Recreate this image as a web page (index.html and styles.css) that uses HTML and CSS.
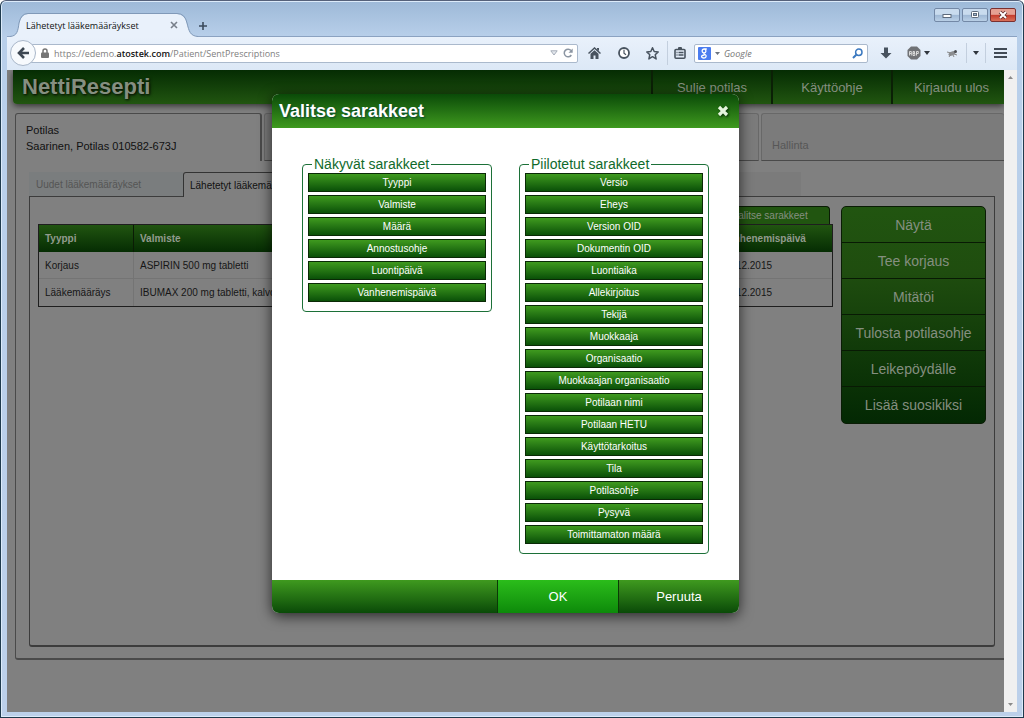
FILE: index.html
```html
<!DOCTYPE html>
<html lang="fi">
<head>
<meta charset="utf-8">
<meta name="viewport" content="width=device-width, initial-scale=1">
<title>Lähetetyt lääkemääräykset</title>
<link rel="stylesheet" href="styles.css">
</head>
<body>
<div class="window">
  <div class="titlebar">
    <div class="browser-tab">
      <svg class="tab-shape" viewBox="0 0 188 26" preserveAspectRatio="none" aria-hidden="true"><path d="M0 24.500C7 24 8 19 9 12Q11 2.500 18 2H167Q175 2.500 177 12C179 19 180 24 188 24.500V26H0Z" fill="#e9f1fb"/><path d="M0 24.500C7 24 8 19 9 11Q11 1.500 18 1.500H167Q175 1.500 177 11C179 19 180 24 188 24.500" fill="none" stroke="#8099b8"/></svg>
      <span class="tab-title">Lähetetyt lääkemääräykset</span>
      <button class="plain tab-close" aria-label="Sulje välilehti"><svg width="8" height="8" viewBox="0 0 8 8"><path d="M1 1l6 6M7 1L1 7" stroke="#777f8a" stroke-width="1.600"/></svg></button>
    </div>
    <button class="plain new-tab" aria-label="Uusi välilehti"><svg width="10" height="10" viewBox="0 0 10 10"><path d="M5 1v8M1 5h8" stroke="#3b4a5c" stroke-width="1.600"/></svg></button>
    <div class="window-controls">
      <button class="win" aria-label="Pienennä"><svg width="24" height="12" viewBox="0 0 24 12"><rect x="8" y="5.500" width="8" height="3" fill="#fff" stroke="#5d6a7c"/></svg></button>
      <button class="win" aria-label="Suurenna"><svg width="24" height="12" viewBox="0 0 24 12"><rect x="8.500" y="2.500" width="7" height="6" rx="1" fill="#fff" stroke="#5d6a7c"/><rect x="10.500" y="4.500" width="3" height="2" fill="#9db5d0" stroke="#5d6a7c"/></svg></button>
      <button class="win win-close" aria-label="Sulje"><svg width="24" height="12" viewBox="0 0 24 12"><path d="M9 3l6 6M15 3L9 9" stroke="#5b2a2a" stroke-width="3.600"/><path d="M9 3l6 6M15 3L9 9" stroke="#fff" stroke-width="2"/></svg></button>
    </div>
  </div>

  <div class="toolbar">
    <button class="back" aria-label="Takaisin"><svg width="13" height="12" viewBox="0 0 13 12"><path d="M7 1L2 6l5 5M2 6h10" fill="none" stroke="#3d4752" stroke-width="2.600"/></svg></button>
    <div class="urlbar">
      <svg width="8" height="10" viewBox="0 0 8 10"><path d="M2 5V3a2 2 0 0 1 4 0v2" fill="none" stroke="#757575" stroke-width="1.500"/><rect y="4.500" width="8" height="5.500" rx="1" fill="#757575"/></svg>
      <span class="url">https://edemo.<b>atostek.com</b>/Patient/SentPrescriptions</span>
      <svg width="8" height="6" viewBox="0 0 8 6"><path d="M.8.8h6.400L4 5Z" fill="#e4e8ee" stroke="#a5adb8"/></svg>
      <svg width="10" height="10" viewBox="0 0 10 10"><path d="M8.300 7A3.800 3.800 0 1 1 8 2.600" fill="none" stroke="#8b95a2" stroke-width="1.500"/><path d="M9.700.5v4.200H5.500Z" fill="#8b95a2"/></svg>
    </div>
    <button class="plain tool" aria-label="Koti"><svg width="13" height="12" viewBox="0 0 13 12"><path d="M.5 6.500L6.500 1l6 5.500" fill="none" stroke="#48535f" stroke-width="1.500"/><path d="M2.500 6.800l4-3.600 4 3.600V12h-3V8.500h-2V12h-3ZM9 1h2v3L9 2.500Z" fill="#48535f"/></svg></button>
    <button class="plain tool" aria-label="Historia"><svg width="12" height="12" viewBox="0 0 12 12"><circle cx="6" cy="6" r="5" fill="#fff" stroke="#48535f" stroke-width="1.800"/><path d="M6 2.800v3.400l2 1.600" fill="none" stroke="#48535f" stroke-width="1.200"/></svg></button>
    <button class="plain tool" aria-label="Lisää kirjanmerkki"><svg width="13" height="13" viewBox="0 0 13 13"><path d="M6.500.8l1.700 3.700 4 .4-3 2.800.9 4.200-3.600-2.200-3.600 2.200.9-4.200-3-2.800 4-.4Z" fill="none" stroke="#48535f" stroke-width="1.500" stroke-linejoin="round"/></svg></button>
    <button class="plain tool narrow" aria-label="Kirjanmerkit"><svg width="12" height="12" viewBox="0 0 12 12"><rect x="1" y="2.500" width="10" height="8.700" rx="1" fill="none" stroke="#48535f" stroke-width="1.600"/><rect x="4" width="4" height="3" rx="1" fill="#48535f"/><path d="M2.500 5.500h1M4.500 5.500h5M2.500 8h1M4.500 8h5" stroke="#48535f" stroke-width="1.300"/></svg></button>
    <div class="search">
      <svg width="13" height="13" viewBox="0 0 13 13"><rect width="13" height="13" rx="1" fill="#4a7cf0"/><path d="M8.800 2H6.300C3.500 2 3.500 5.800 6 5.800S8.500 2.700 6.500 2.200M6 5.800c-.8.800 0 1 .8 1.500 2.500 1.500 1.200 3.700-1 3.700-3 0-3.200-2.700.8-3" fill="none" stroke="#fff" stroke-width="1.300"/></svg>
      <svg width="5" height="3" viewBox="0 0 5 3"><path d="M0 0h5L2.500 3Z" fill="#6b7480"/></svg>
      <input type="text" placeholder="Google" aria-label="Haku">
      <svg width="11" height="11" viewBox="0 0 11 11"><circle cx="6.800" cy="4.200" r="3.200" fill="none" stroke="#3c79c0" stroke-width="1.500"/><path d="M4.300 6.700L1 10" stroke="#3c79c0" stroke-width="2"/></svg>
    </div>
    <button class="plain tool" aria-label="Lataukset"><svg width="12" height="12" viewBox="0 0 12 12"><path d="M4 .5h4V6h3.500L6 11.500.5 6H4Z" fill="#48535f"/></svg></button>
    <button class="plain tool wide" aria-label="Adblock Plus"><svg width="14" height="14" viewBox="0 0 14 14"><path d="M4 .5h6L13.500 4v6L10 13.500H4L.5 10V4Z" fill="#707276"/><path d="M2.500 9.500v-4h1.800v4M2.500 7.500h1.800M6 9.500v-4h1.500v1.800H6h1.800v2.200ZM9.500 9.500v-4h1.800v2H9.500" fill="none" stroke="#e3e3e3" stroke-width=".9"/></svg><svg width="6" height="4" viewBox="0 0 6 4"><path d="M0 0h6L3 4Z" fill="#30363d"/></svg></button>
    <button class="plain tool" aria-label="Firebug"><svg width="12" height="11" viewBox="0 0 12 11"><ellipse cx="6" cy="5.500" rx="3.800" ry="2" transform="rotate(-25 6 5.500)" fill="#8b8d90"/><circle cx="9.500" cy="3.500" r="1.500" fill="#4c4e52"/><path d="M1 4l4 1M3 9l2-3M7 7l1 2M8 6l3 1" stroke="#888" stroke-width="1"/></svg></button>
    <button class="plain caret" aria-label="Firebug-valikko"><svg width="6" height="4" viewBox="0 0 6 4"><path d="M0 0h6L3 4Z" fill="#30363d"/></svg></button>
    <button class="plain tool" aria-label="Valikko"><svg width="13" height="12" viewBox="0 0 13 12"><path d="M0 2h13M0 6h13M0 10h13" stroke="#414a55" stroke-width="2.200"/></svg></button>
  </div>

  <div class="viewport">
    <main class="page">
      <header class="app-header">
        <h1>NettiResepti</h1>
        <nav>
          <button>Sulje potilas</button>
          <button>Käyttöohje</button>
          <button>Kirjaudu ulos</button>
        </nav>
      </header>

      <div class="main-tabs">
        <button class="main-tab current">Potilas<br>Saarinen, Potilas 010582-673J</button>
        <button class="main-tab idle"></button>
        <button class="main-tab idle last">Hallinta</button>
      </div>
      <section class="main-panel">
        <div class="sub-tabs">
          <button class="sub-tab">Uudet lääkemääräykset</button>
          <button class="sub-tab current">Lähetetyt lääkemääräykset</button>
          <button class="sub-tab rest"></button>
        </div>
        <div class="sub-panel">
          <div class="listing">
            <button class="pick">Valitse sarakkeet</button>
            <table>
              <colgroup><col class="c-type"><col><col class="c-expiry"></colgroup>
              <thead><tr><th>Tyyppi</th><th>Valmiste</th><th>Vanhenemispäivä</th></tr></thead>
              <tbody>
                <tr><td>Korjaus</td><td>ASPIRIN 500 mg tabletti</td><td>31.12.2015</td></tr>
                <tr><td>Lääkemääräys</td><td>IBUMAX 200 mg tabletti, kalvopäällysteinen</td><td>31.12.2015</td></tr>
              </tbody>
            </table>
          </div>
          <div class="actions">
            <button>Näytä</button>
            <button>Tee korjaus</button>
            <button>Mitätöi</button>
            <button>Tulosta potilasohje</button>
            <button>Leikepöydälle</button>
            <button>Lisää suosikiksi</button>
          </div>
        </div>
      </section>

      <div class="overlay">
        <div class="dialog" role="dialog" aria-labelledby="dialog-title">
          <div class="dialog-head">
            <h2 id="dialog-title">Valitse sarakkeet</h2>
            <button class="plain" aria-label="Sulje ikkuna"><svg width="12" height="12" viewBox="0 0 12 12"><path d="M2 2l8 8M10 2l-8 8" stroke="#e4f5dc" stroke-width="3.200"/></svg></button>
          </div>
          <div class="dialog-body">
            <fieldset>
              <legend>Näkyvät sarakkeet</legend>
              <button>Tyyppi</button>
              <button>Valmiste</button>
              <button>Määrä</button>
              <button>Annostusohje</button>
              <button>Luontipäivä</button>
              <button>Vanhenemispäivä</button>
            </fieldset>
            <fieldset>
              <legend>Piilotetut sarakkeet</legend>
              <button>Versio</button>
              <button>Eheys</button>
              <button>Version OID</button>
              <button>Dokumentin OID</button>
              <button>Luontiaika</button>
              <button>Allekirjoitus</button>
              <button>Tekijä</button>
              <button>Muokkaaja</button>
              <button>Organisaatio</button>
              <button>Muokkaajan organisaatio</button>
              <button>Potilaan nimi</button>
              <button>Potilaan HETU</button>
              <button>Käyttötarkoitus</button>
              <button>Tila</button>
              <button>Potilasohje</button>
              <button>Pysyvä</button>
              <button>Toimittamaton määrä</button>
            </fieldset>
          </div>
          <div class="dialog-foot">
            <button class="ok">OK</button>
            <button>Peruuta</button>
          </div>
        </div>
      </div>
    </main>
    <div class="scrollbar">
      <svg width="7" height="4" viewBox="0 0 7 4"><path d="M1 4h5L3.500 1Z" fill="#8a8a8a"/></svg>
      <svg width="7" height="4" viewBox="0 0 7 4"><path d="M1 0h5L3.500 3Z" fill="#8a8a8a"/></svg>
    </div>
  </div>
</div>
</body>
</html>
```
FILE: styles.css
```css
* { box-sizing: border-box; }

body {
  margin: 0;
  font-family: "Liberation Sans", Arial, sans-serif;
  font-size: 11px;
}

button, input {
  margin: 0;
  padding: 0;
  font: inherit;
  color: inherit;
}

button { cursor: pointer; }

svg { display: block; flex: none; }

.plain {
  display: flex;
  align-items: center;
  justify-content: center;
  border: 0;
  background: none;
}

/* Browser frame */
.window {
  display: flex;
  flex-direction: column;
  height: 100vh;
  padding: 0 5px 5px;
  border: 1px solid #1f3a4d;
  border-top-color: #55617a;
  border-radius: 6px 6px 0 0;
  background: linear-gradient(#9db9d8, #b8cfea 36px, #bcd0ea);
  box-shadow: inset 0 0 0 1px #dcebfa;
}

.titlebar {
  display: flex;
  align-items: flex-end;
  height: 35px;
  margin: 0 1px;
  font-family: "Open Sans", "Noto Sans", sans-serif;
  font-size: 9px;
}

.browser-tab {
  position: relative;
  display: flex;
  align-items: center;
  width: 188px;
  height: 24px;
  margin-left: 3px;
  padding: 2px 20px 0 16px;
  color: #111;
}

.tab-shape {
  position: absolute;
  inset: 0;
  width: 100%;
  height: 26px;
}

.tab-title { position: relative; flex: 1; white-space: nowrap; }
.tab-close { position: relative; }
.new-tab { width: 10px; height: 21px; }

.window-controls {
  display: flex;
  gap: 2px;
  align-self: flex-start;
  margin: 7px 1px 0 auto;
}

.win {
  padding: 0;
  border: 1px solid #7388a6;
  border-radius: 2px;
  background: linear-gradient(#c9dbee 45%, #9fb8d5 50%, #b9cfe6);
}

.win-close {
  border-color: #7a3030;
  background: linear-gradient(#e5a093 45%, #c43a2a 50%, #d8705a);
}

.toolbar {
  display: flex;
  align-items: center;
  height: 34px;
  margin: 0 1px;
  padding: 0 2px 1px 3px;
  border-top: 1px solid #8ba2c1;
  background: linear-gradient(#e9f1fb, #dce8f6);
  font-family: "Open Sans", "Noto Sans", sans-serif;
  font-size: 10px;
}

.back {
  display: flex;
  align-items: center;
  justify-content: center;
  z-index: 1;
  width: 26px;
  height: 26px;
  margin-right: -6px;
  border: 1px solid #a9b7c9;
  border-radius: 50%;
  background: #f7fafd;
}

.urlbar, .search {
  display: flex;
  align-items: center;
  height: 19px;
  border: 1px solid #aab9cc;
  border-radius: 2px;
  background: #fff;
}

.urlbar { flex: 1; gap: 5px; margin-right: 2px; padding: 0 4px 0 10px; }
.url { flex: 1; color: #808080; font-size: 9px; white-space: nowrap; }
.url b { color: #111; font-weight: 600; }

.search { gap: 4px; width: 174px; margin: 0 3px; padding: 0 4px 0 3px; }
.search input { flex: 1; width: 40px; padding: 0; border: 0; background: none; outline: 0; }
.search input::placeholder { color: #777; font-size: 9px; font-style: italic; opacity: 1; }

.tool { width: 29px; height: 24px; gap: 3px; }
.wide { width: 37px; }
.narrow { width: 24px; border-left: 1px solid #c3cfde; }
.caret { width: 20px; height: 20px; border: 1px solid #c3cfde; border-width: 0 1px; }

.viewport { display: flex; flex: 1; min-height: 0; margin: 0 1px; }

.page {
  position: relative;
  flex: 1;
  min-width: 0;
  overflow: hidden;
  background: #808080;
}

.scrollbar {
  display: flex;
  flex-direction: column;
  align-items: center;
  justify-content: space-between;
  width: 13px;
  padding: 5px 0;
  background: #f0f0f0;
}

/* Application behind the dialog */
.app-header {
  display: flex;
  align-items: stretch;
  justify-content: space-between;
  height: 34px;
  margin-left: 6px;
  padding-left: 9px;
  border-radius: 0 0 0 4px;
  background: linear-gradient(#052c03, #215510);
  box-shadow: 0 2px 6px rgba(0, 0, 0, .6);
  color: #858f80;
}

.app-header h1 {
  margin: 0;
  font-size: 22px;
  line-height: 34px;
  text-shadow: 1px 1px 3px #000;
}

.app-header nav { display: flex; }

.app-header nav button {
  width: 120px;
  border: 0;
  border-left: 2px solid #0b2006;
  background: none;
  font-size: 13px;
}

.app-header nav button:last-child { width: 113px; padding-left: 6px; }

.main-tabs { display: flex; gap: 2px; margin: 9px 0 0 8px; }

.main-tab {
  height: 48px;
  padding: 0 10px;
  border: 1px solid #4a4a4a;
  border-radius: 3px 3px 0 0;
  background: #808080;
  color: #111;
  line-height: 16px;
  text-align: left;
}

.main-tab.current { width: 247px; border-right-width: 2px; border-bottom: 0; }
.main-tab.idle { flex: 1; border-color: #686868; border-bottom-color: #4a4a4a; background: #7b7b7b; color: #575757; }
.main-tab.last { flex: none; width: 243px; padding-top: 16px; border-right: 0; }

.main-panel {
  margin-left: 8px;
  padding: 11px 9px 11px 13px;
  border: 1px solid #4a4a4a;
  border-width: 0 0 2px 1px;
  border-radius: 0 0 0 3px;
}

.sub-tabs { display: flex; height: 24px; font-size: 10px; }

.sub-tab {
  width: 154px;
  padding: 0 7px;
  border: 0;
  background: #7a7d7e;
  color: #555;
  text-align: left;
  white-space: nowrap;
}

.sub-tab.current {
  width: 156px;
  height: 25px;
  z-index: 1;
  padding: 0 6px;
  border: 1px solid #333;
  border-bottom: 0;
  border-radius: 3px 3px 0 0;
  background: #808080;
  color: #111;
}

.sub-tab.rest { width: 462px; background: #7b7b7b; }

.sub-panel {
  display: flex;
  gap: 8px;
  align-items: flex-start;
  min-height: 451px;
  padding: 9px 8px;
  border: 1px solid #3c3c3c;
  border-bottom-width: 2px;
  border-radius: 0 0 3px 3px;
}

.listing { display: flex; flex: 1; flex-direction: column; align-items: flex-end; font-size: 10px; }

.pick {
  width: 120px;
  height: 18px;
  margin-right: 3px;
  border: 1px solid #0a1c05;
  border-bottom: 0;
  border-radius: 4px 4px 0 0;
  background: #215510;
  color: #858f80;
}

table {
  width: 100%;
  table-layout: fixed;
  border-collapse: separate;
  border-spacing: 0;
  border: 1px solid #1e1e1e;
  color: #161616;
}

.c-type { width: 95px; }
.c-expiry { width: 116px; }

th, td { height: 27px; padding: 0 6px; text-align: left; white-space: nowrap; overflow: hidden; }
thead tr { background: linear-gradient(#215510, #052c03); color: #929b8e; }
th { border-right: 1px solid #0a1c05; }
td { border-right: 1px solid #747474; border-bottom: 1px solid #747474; }
th:last-child, td:last-child { border-right: 0; }
tr:last-child td { border-bottom: 0; }

.actions {
  display: flex;
  flex-direction: column;
  width: 145px;
  border: 1px solid #0a1c05;
  border-radius: 5px;
  background: linear-gradient(#215510, #1f4d0f 30%, #032803);
  color: #858f80;
  font-size: 14px;
}

.actions button { height: 36px; border: 0; border-bottom: 1px solid #081a04; background: none; }
.actions button:last-child { border-bottom: 0; }

/* Column picker dialog */
.overlay {
  position: absolute;
  inset: 0;
  display: flex;
  align-items: flex-start;
  justify-content: center;
  z-index: 2;
  padding-top: 24px;
}

.dialog {
  width: 467px;
  overflow: hidden;
  border-radius: 7px;
  background: #fff;
  box-shadow: 0 3px 14px rgba(0, 0, 0, .7);
  color: #fff;
}

.dialog-head {
  display: flex;
  align-items: center;
  justify-content: space-between;
  height: 34px;
  padding: 0 10px 0 7px;
  background: linear-gradient(#0a4a08, #3f9a1f);
}

.dialog-head h2 { margin: 0; font-size: 18px; text-shadow: 1px 1px 2px #043; }
.dialog-head svg { filter: drop-shadow(1px 1px 1px #052c03); }

.dialog-body {
  display: flex;
  gap: 27px;
  align-items: flex-start;
  justify-content: center;
  padding: 27px 30px 26px;
}

fieldset {
  display: flex;
  flex: 1;
  flex-direction: column;
  gap: 3px;
  min-width: 0;
  margin: 0;
  padding: 0 5px 9px;
  border: 1px solid #1c7038;
  border-radius: 4px;
}

legend { margin-left: 4px; padding: 0 2px; color: #0f6a2b; font-size: 14px; line-height: 18px; }

fieldset button {
  height: 19px;
  border: 1px solid #0a2a06;
  background: linear-gradient(#3f9a1f, #0a5008);
  font-size: 10px;
  line-height: 14px;
}

.dialog-foot {
  display: flex;
  justify-content: flex-end;
  height: 33px;
  background: linear-gradient(#3f9a1f, #0a4a08);
}

.dialog-foot button {
  width: 121px;
  border: 0;
  border-left: 1px solid #0a3a06;
  background: none;
  font-size: 13px;
}

.dialog-foot .ok { background: linear-gradient(#2bbd1b, #0d8a0a); }
```
